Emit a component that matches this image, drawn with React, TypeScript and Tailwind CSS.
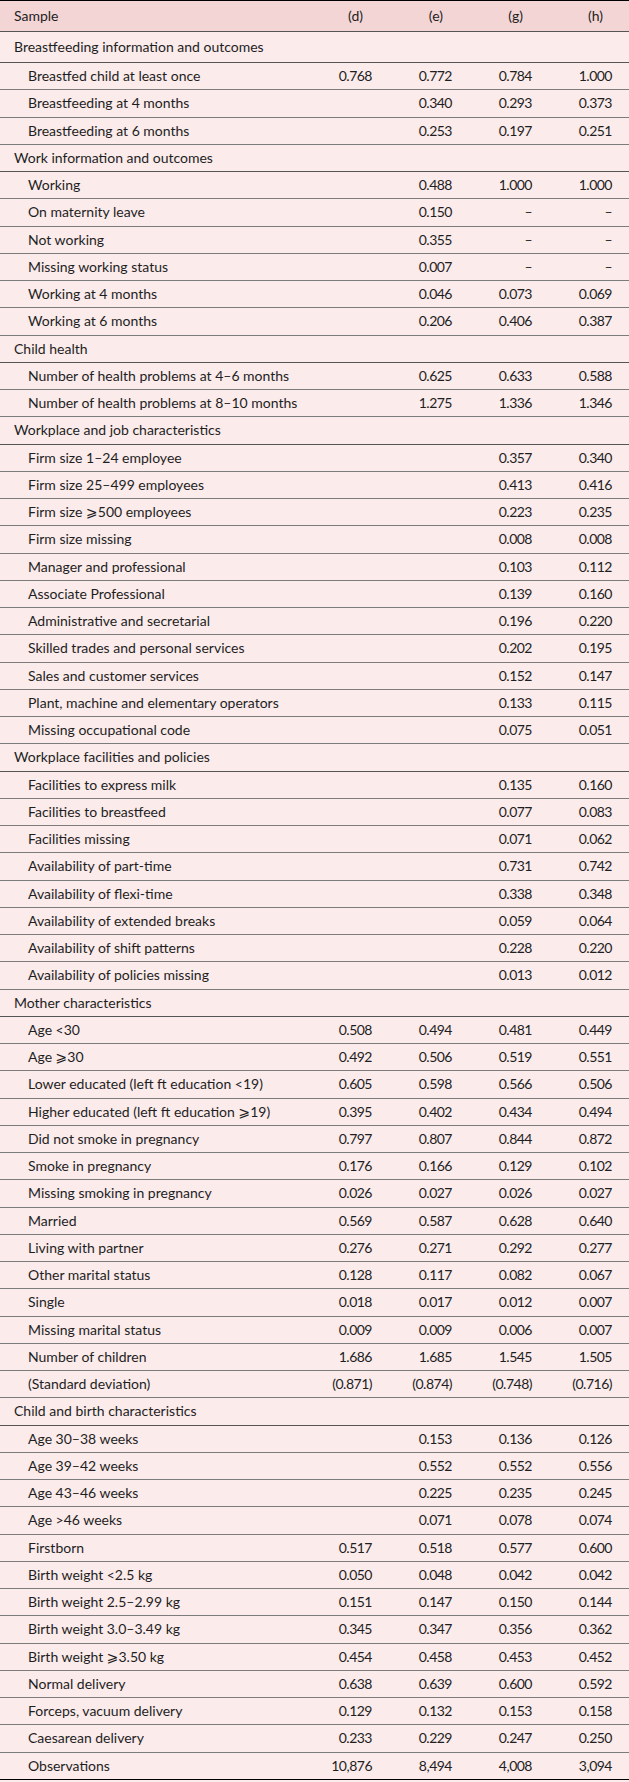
type Row = { label: string; vals: string[] };
type Section = { title: string; rows: Row[] };

const r = (label: string, d: string, e: string, g: string, h: string): Row => ({
  label,
  vals: [d, e, g, h],
});

const sections: Section[] = [
  {
    title: 'Breastfeeding information and outcomes',
    rows: [
      r('Breastfed child at least once', '0.768', '0.772', '0.784', '1.000'),
      r('Breastfeeding at 4 months', '', '0.340', '0.293', '0.373'),
      r('Breastfeeding at 6 months', '', '0.253', '0.197', '0.251'),
    ],
  },
  {
    title: 'Work information and outcomes',
    rows: [
      r('Working', '', '0.488', '1.000', '1.000'),
      r('On maternity leave', '', '0.150', '–', '–'),
      r('Not working', '', '0.355', '–', '–'),
      r('Missing working status', '', '0.007', '–', '–'),
      r('Working at 4 months', '', '0.046', '0.073', '0.069'),
      r('Working at 6 months', '', '0.206', '0.406', '0.387'),
    ],
  },
  {
    title: 'Child health',
    rows: [
      r('Number of health problems at 4–6 months', '', '0.625', '0.633', '0.588'),
      r('Number of health problems at 8–10 months', '', '1.275', '1.336', '1.346'),
    ],
  },
  {
    title: 'Workplace and job characteristics',
    rows: [
      r('Firm size 1–24 employee', '', '', '0.357', '0.340'),
      r('Firm size 25–499 employees', '', '', '0.413', '0.416'),
      r('Firm size ⩾500 employees', '', '', '0.223', '0.235'),
      r('Firm size missing', '', '', '0.008', '0.008'),
      r('Manager and professional', '', '', '0.103', '0.112'),
      r('Associate Professional', '', '', '0.139', '0.160'),
      r('Administrative and secretarial', '', '', '0.196', '0.220'),
      r('Skilled trades and personal services', '', '', '0.202', '0.195'),
      r('Sales and customer services', '', '', '0.152', '0.147'),
      r('Plant, machine and elementary operators', '', '', '0.133', '0.115'),
      r('Missing occupational code', '', '', '0.075', '0.051'),
    ],
  },
  {
    title: 'Workplace facilities and policies',
    rows: [
      r('Facilities to express milk', '', '', '0.135', '0.160'),
      r('Facilities to breastfeed', '', '', '0.077', '0.083'),
      r('Facilities missing', '', '', '0.071', '0.062'),
      r('Availability of part-time', '', '', '0.731', '0.742'),
      r('Availability of flexi-time', '', '', '0.338', '0.348'),
      r('Availability of extended breaks', '', '', '0.059', '0.064'),
      r('Availability of shift patterns', '', '', '0.228', '0.220'),
      r('Availability of policies missing', '', '', '0.013', '0.012'),
    ],
  },
  {
    title: 'Mother characteristics',
    rows: [
      r('Age <30', '0.508', '0.494', '0.481', '0.449'),
      r('Age ⩾30', '0.492', '0.506', '0.519', '0.551'),
      r('Lower educated (left ft education <19)', '0.605', '0.598', '0.566', '0.506'),
      r('Higher educated (left ft education ⩾19)', '0.395', '0.402', '0.434', '0.494'),
      r('Did not smoke in pregnancy', '0.797', '0.807', '0.844', '0.872'),
      r('Smoke in pregnancy', '0.176', '0.166', '0.129', '0.102'),
      r('Missing smoking in pregnancy', '0.026', '0.027', '0.026', '0.027'),
      r('Married', '0.569', '0.587', '0.628', '0.640'),
      r('Living with partner', '0.276', '0.271', '0.292', '0.277'),
      r('Other marital status', '0.128', '0.117', '0.082', '0.067'),
      r('Single', '0.018', '0.017', '0.012', '0.007'),
      r('Missing marital status', '0.009', '0.009', '0.006', '0.007'),
      r('Number of children', '1.686', '1.685', '1.545', '1.505'),
      r('(Standard deviation)', '(0.871)', '(0.874)', '(0.748)', '(0.716)'),
    ],
  },
  {
    title: 'Child and birth characteristics',
    rows: [
      r('Age 30–38 weeks', '', '0.153', '0.136', '0.126'),
      r('Age 39–42 weeks', '', '0.552', '0.552', '0.556'),
      r('Age 43–46 weeks', '', '0.225', '0.235', '0.245'),
      r('Age >46 weeks', '', '0.071', '0.078', '0.074'),
      r('Firstborn', '0.517', '0.518', '0.577', '0.600'),
      r('Birth weight <2.5 kg', '0.050', '0.048', '0.042', '0.042'),
      r('Birth weight 2.5–2.99 kg', '0.151', '0.147', '0.150', '0.144'),
      r('Birth weight 3.0–3.49 kg', '0.345', '0.347', '0.356', '0.362'),
      r('Birth weight ⩾3.50 kg', '0.454', '0.458', '0.453', '0.452'),
      r('Normal delivery', '0.638', '0.639', '0.600', '0.592'),
      r('Forceps, vacuum delivery', '0.129', '0.132', '0.153', '0.158'),
      r('Caesarean delivery', '0.233', '0.229', '0.247', '0.250'),
      r('Observations', '10,876', '8,494', '4,008', '3,094'),
    ],
  },
];

const cols = 'grid grid-cols-[minmax(0,1fr)_80px_80px_80px_80px] items-center';

export default function App() {
  const lastSection = sections.length - 1;

  return (
    <div
      className="min-h-screen w-full bg-[#fbebeb] text-[#1e1e1e] text-[14px] leading-none"
      style={{ fontFamily: 'Lato, "DejaVu Sans", sans-serif' }}
    >
      <div className="border-t border-black">
        {/* Header */}
        <div className={`${cols} h-[31px] bg-[#f3d5d5] border-b border-[#555555] pr-[17px]`}>
          <div className="pl-[14px]">Sample</div>
          {['(d)', '(e)', '(g)', '(h)'].map((h) => (
            <div key={h} className="text-right pr-[9px]">
              {h}
            </div>
          ))}
        </div>

        {sections.map((s, si) => (
          <div key={s.title}>
            <div
              className={`flex items-center pl-[14px] border-b border-[#555555] ${
                si === 0 ? 'h-[31px]' : 'h-[27.25px]'
              }`}
            >
              {s.title}
            </div>
            {s.rows.map((row, ri) => {
              const isLast = si === lastSection && ri === s.rows.length - 1;
              return (
                <div
                  key={row.label}
                  className={`${cols} h-[27.25px] pr-[17px] border-b ${
                    isLast ? 'border-black' : 'border-[#7c7c7c]'
                  }`}
                >
                  <div className="pl-[28px] whitespace-nowrap">{row.label}</div>
                  {row.vals.map((v, vi) => (
                    <div key={vi} className="text-right tracking-[-0.5px]">
                      {v}
                    </div>
                  ))}
                </div>
              );
            })}
          </div>
        ))}
      </div>
    </div>
  );
}
